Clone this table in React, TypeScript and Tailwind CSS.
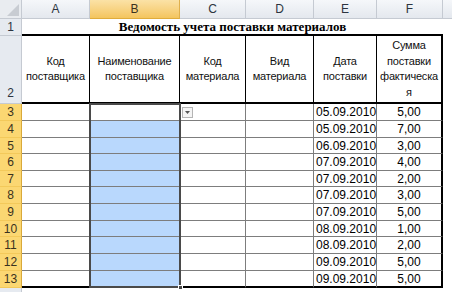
import React from "react";

const rows = [
  { n: 3, h: "h-[17px]", date: "05.09.2010", sum: "5,00" },
  { n: 4, h: "h-[17px]", date: "05.09.2010", sum: "7,00" },
  { n: 5, h: "h-[16px]", date: "06.09.2010", sum: "3,00" },
  { n: 6, h: "h-[17px]", date: "07.09.2010", sum: "4,00" },
  { n: 7, h: "h-[16px]", date: "07.09.2010", sum: "2,00" },
  { n: 8, h: "h-[17px]", date: "07.09.2010", sum: "3,00" },
  { n: 9, h: "h-[17px]", date: "07.09.2010", sum: "5,00" },
  { n: 10, h: "h-[16px]", date: "08.09.2010", sum: "1,00" },
  { n: 11, h: "h-[17px]", date: "08.09.2010", sum: "2,00" },
  { n: 12, h: "h-[17px]", date: "09.09.2010", sum: "5,00" },
  { n: 13, h: "h-[17px]", date: "09.09.2010", sum: "5,00" },
];

const headers = [
  ["Код", "поставщика"],
  ["Наименование", "поставщика"],
  ["Код", "материала"],
  ["Вид", "материала"],
  ["Дата", "поставки"],
  ["Сумма", "поставки", "фактическа", "я"],
];

const colHead =
  "flex items-center justify-center border-r border-b border-[#c5cad2] bg-linear-to-b from-[#f5f7fa] to-[#e4e8ee] text-[#2c3440]";
const rowHead =
  "flex justify-center border-r border-b border-[#c5cad2] bg-[#e6eaf0] text-[#2c3440]";
const rowHeadSel =
  "flex items-center justify-center border-r border-b border-r-[#d9a93a] border-b-[#f3c95a] bg-[#fbd772] text-[#3a3220]";
const cell = "border-r border-b border-[#7d7d7d]";

export default function App() {
  return (
    <div className="relative w-[452px] h-[292px] overflow-hidden bg-white font-['Liberation_Sans',Arial,sans-serif] text-[12px] text-black">
      <div className="grid grid-cols-[22px_68px_90px_66px_68px_63px_66px_9px]">
        {/* column headers */}
        <div className="relative h-[19px] border-r border-b border-[#c5cad2] bg-[#e9ecf0]">
          <svg className="absolute right-[2px] bottom-[2px]" width="12" height="12" viewBox="0 0 12 12">
            <polygon points="12,0 12,12 0,12" fill="#c8ccd2" />
          </svg>
        </div>
        <div className={colHead}>A</div>
        <div className="flex items-center justify-center border-r border-b border-r-[#e0b04c] border-b-[#e0ac3c] bg-linear-to-b from-[#fbe2a6] to-[#f4c55e] text-[#3a3220]">
          B
        </div>
        <div className={colHead}>C</div>
        <div className={colHead}>D</div>
        <div className={colHead}>E</div>
        <div className={colHead}>F</div>
        <div className="border-b border-[#c5cad2] bg-linear-to-b from-[#f5f7fa] to-[#e4e8ee]" />

        {/* row 1 */}
        <div className={rowHead + " h-[17px] items-center"}>1</div>
        <div className="col-span-6 flex items-center justify-center border-b-2 border-black font-['Liberation_Serif','Times_New_Roman',serif] text-[13px] font-bold leading-none">
          Ведомость учета поставки материалов
        </div>
        <div />

        {/* row 2 */}
        <div className={rowHead + " h-[68px] items-end pb-[1px]"}>2</div>
        {headers.map((lines, i) => (
          <div
            key={i}
            className={
              "flex flex-col items-center justify-center border-b-2 border-black text-center text-[11px] leading-[15.5px] tracking-[-0.2px] text-[#111] " +
              (i === 5 ? "border-r-2" : "border-r")
            }
          >
            {lines.map((l, j) => (
              <span key={j}>{l}</span>
            ))}
          </div>
        ))}
        <div />

        {/* data rows */}
        {rows.map((r, i) => {
          const last = i === rows.length - 1;
          const bottom = last ? " border-b-2 border-b-black" : "";
          return (
            <React.Fragment key={r.n}>
              <div className={rowHeadSel + " " + r.h}>{r.n}</div>
              <div className={cell + bottom} />
              <div className={cell + bottom + (i === 0 ? " bg-white" : " bg-[#b9d8fd]")} />
              <div className={cell + bottom} />
              <div className={cell + bottom} />
              <div className={cell + bottom + " flex items-center pl-[2px] leading-none"}>{r.date}</div>
              <div className={"flex items-center justify-center border-b border-r-2 border-[#7d7d7d] border-r-black leading-none" + bottom}>
                {r.sum}
              </div>
              <div />
            </React.Fragment>
          );
        })}

        {/* row 14 (cut off) */}
        <div className="h-[6px] border-r border-[#c5cad2] bg-[#e6eaf0]" />
        <div className="col-span-7" />
      </div>

      {/* selection outline B3:B13 */}
      <div className="absolute left-[89px] top-[103px] w-[92px] h-[185px] border-2 border-[#4a4a4a]" />
      <div className="absolute left-[178px] top-[285px] w-[5px] h-[5px] border border-white bg-[#4a4a4a]" />

      {/* data validation dropdown */}
      <div className="absolute left-[182px] top-[107px] flex w-[11px] h-[11px] items-center justify-center border border-[#b4b4b4] bg-[#f4f4f4]">
        <svg width="5" height="3" viewBox="0 0 5 3">
          <polygon points="0,0 5,0 2.5,3" fill="#555" />
        </svg>
      </div>
    </div>
  );
}
